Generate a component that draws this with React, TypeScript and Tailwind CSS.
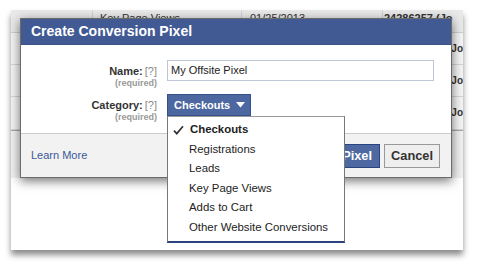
import React from "react";

const rowHeights = ["h-[32px]", "h-[32px]", "h-[33px]"];

export default function App() {
  return (
    <div className="w-[481px] h-[269px] bg-white pl-[11px] pt-[10px] font-['Liberation_Sans',Arial,sans-serif]">
      <div className="relative w-[452px] h-[240px] bg-white shadow-[0_5px_6px_rgba(0,0,0,0.45)] overflow-hidden">
        <div className="flex flex-col">
          <div className="grid grid-cols-[82px_149px_141px_80px] h-[23px] bg-[#e9e9e9] border-b border-[#cfcfcf] text-[11px] leading-[14px] text-[#333]">
            <div className="border-r border-[#d0d0d0]" />
            <div className="border-r border-[#d0d0d0] pl-[7px] pt-[1px]">Key Page Views</div>
            <div className="border-r border-[#d0d0d0] pl-[8px] pt-[1px]">01/25/2013</div>
            <div className="pl-[1px] pt-[1px] whitespace-nowrap font-bold">24286257 (Jo</div>
          </div>
          {rowHeights.map((h, i) => (
            <div
              key={i}
              className={`${h} flex items-center justify-end bg-[#f4f4f4] border-b border-[#d4d4d4] text-[10px] leading-[14px] text-[#333] font-bold`}
            >
              <span className="whitespace-nowrap">Jo</span>
            </div>
          ))}
          <div className="h-[48px] bg-[#f0f0f0] border-t border-[#a8a8a8]" />
        </div>

        {/* dialog */}
        <div className="absolute left-[9px] top-[8px] w-[432px] h-[160px] border border-[#6b6b6b] bg-white shadow-[0_3px_10px_rgba(0,0,0,0.55)] flex flex-col">
          <div className="h-[26px] bg-[#415a94] border-b border-[#3a5189] pl-[10px] flex items-center text-white font-bold text-[14px]">
            Create Conversion Pixel
          </div>
          <div className="flex flex-col gap-[6px] pt-[15px] pb-[11px] pr-[17px] h-[88px]">
            <div className="flex items-start">
              <div className="w-[136px] pt-[4px] flex flex-col items-end">
                <div className="text-[11px] leading-[14px] whitespace-nowrap">
                  <span className="font-bold text-[#333]">Name:</span>
                  <span className="text-[#8a8a8a] ml-[2px]">[?]</span>
                </div>
                <div className="text-[9px] leading-[10px] font-bold text-[#999]">(required)</div>
              </div>
              <div className="ml-[10px] flex-1 h-[21px] border border-[#bdc7d8] flex items-center pl-[3px] text-[11px] text-[#222]">
                My Offsite Pixel
              </div>
            </div>
            <div className="flex items-start">
              <div className="w-[136px] pt-[4px] flex flex-col items-end">
                <div className="text-[11px] leading-[14px] whitespace-nowrap">
                  <span className="font-bold text-[#333]">Category:</span>
                  <span className="text-[#8a8a8a] ml-[2px]">[?]</span>
                </div>
                <div className="text-[9px] leading-[10px] font-bold text-[#999]">(required)</div>
              </div>
              <div className="ml-[10px] relative">
                <div className="h-[22px] w-[84px] bg-[#4d67a0] border border-[#36508a] flex items-center pl-[6px] text-white font-bold text-[11px]">
                  Checkouts
                  <svg width="9" height="6" viewBox="0 0 9 6" className="ml-[6px]">
                    <path d="M0 0 H9 L4.5 5.5 Z" fill="#fff" />
                  </svg>
                </div>
                <div className="absolute left-0 top-[22px] w-[178px] bg-white border border-[#777] border-t-[#999] border-b-2 border-b-[#29447e] pt-[3px] pb-[4px] z-10 text-[11.4px] text-[#222]">
                  <div className="h-[19.5px] flex items-center pl-[5px] font-bold">
                    <svg width="11" height="10" viewBox="0 0 11 10" className="mr-[6px]">
                      <path d="M1 5.6 L3.8 8.6 L10 1.2" stroke="#333" strokeWidth="1.7" fill="none" />
                    </svg>
                    Checkouts
                  </div>
                  <div className="h-[19.5px] flex items-center pl-[21px]">Registrations</div>
                  <div className="h-[19.5px] flex items-center pl-[21px]">Leads</div>
                  <div className="h-[19.5px] flex items-center pl-[21px]">Key Page Views</div>
                  <div className="h-[19.5px] flex items-center pl-[21px]">Adds to Cart</div>
                  <div className="h-[19.5px] flex items-center pl-[21px]">Other Website Conversions</div>
                </div>
              </div>
            </div>
          </div>
          <div className="flex-1 border-t border-[#cccccc] bg-[#f2f2f2] flex items-center pl-[10px] pr-[11px]">
            <span className="text-[11px] text-[#3b5998]">Learn More</span>
            <div className="ml-auto flex gap-[4px]">
              <div className="h-[24px] px-[7px] bg-[#4e69a2] border border-[#29447e] flex items-center text-white font-bold text-[12.8px]">
                Create Pixel
              </div>
              <div className="h-[24px] px-[6px] bg-[#eeeeee] border border-[#999] flex items-center text-[#333] font-bold text-[12.8px]">
                Cancel
              </div>
            </div>
          </div>
        </div>
      </div>
    </div>
  );
}
